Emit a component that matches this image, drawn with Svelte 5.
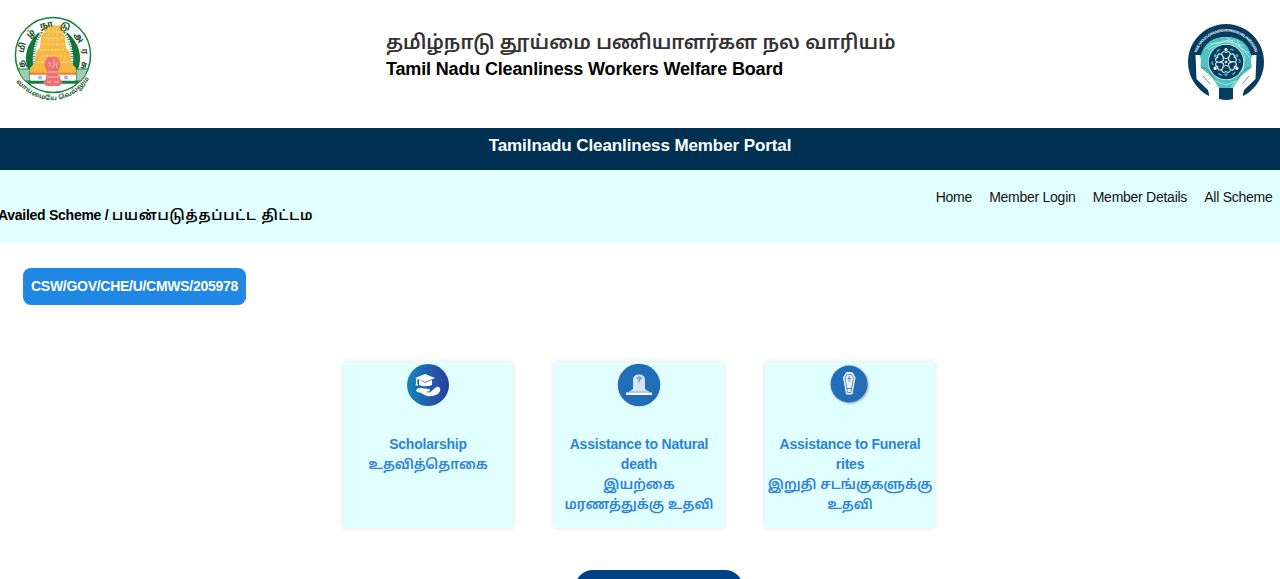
<script>
  const links = ['Home', 'Member Login', 'Member Details', 'All Scheme'];
  const cards = [
    { icon: 'cap', en: ['Scholarship'], ta: ['உதவித்தொகை'] },
    { icon: 'tomb', en: ['Assistance to Natural', 'death'], ta: ['இயற்கை', 'மரணத்துக்கு உதவி'] },
    { icon: 'coffin', en: ['Assistance to Funeral', 'rites'], ta: ['இறுதி சடங்குகளுக்கு', 'உதவி'] }
  ];
  const petals = [0, 60, 120, 180, 240, 300];
  const tiers = [0, 1, 2, 3, 4, 5];
</script>

<div class="page">
  <header>
    <svg class="seal" width="80" height="90" viewBox="0 0 80 90">
      <defs>
        <path id="top-arc" d="M12.500 53 A29.500 29.500 0 1 1 67.500 53" />
        <path id="low-arc" d="M3 68 Q20 86 40 86 Q60 86 76 65" />
      </defs>
      <circle cx="40" cy="41" r="37.6" fill="#fff" stroke="#16803c" stroke-width="1.5" />
      <path d="M25 19 Q8 35 15 56 H26 L24 48 Q19 36 30 18Z M55 19 Q72 35 65 56 H54 L56 48 Q61 36 50 18Z" fill="#137339" />
      <path d="M29 20 Q20 36 23 54 M51 20 Q60 36 57 54" fill="none" stroke="#fff" stroke-width="5" stroke-dasharray="1.6 .8" />
      <path d="M5 55 H17 V67 H12 Q7 62 5 55Z M75 55 H63 V67 H68 Q73 62 75 55Z" fill="#a3cbb4" stroke="#16803c" />
      <path d="M30 13 L34 11 L37 12 L40 11 L43 12 L46 11 L50 13 L49 18 L52 22 L53 34 L57 38 L58 49 L63 54 V58 H17 V54 L22 49 L23 38 L27 34 L28 22 L31 18Z" fill="#f5b942" />
      {#each tiers as t}
        <path d={`M${31 - t * 1.3} ${18 + t * 6} H${49 + t * 1.3}`} stroke="#fff3cf" stroke-width=".8" stroke-dasharray="2 1.6" />
      {/each}
      <path d="M36 14 V34 M40 14 V34 M44 14 V34" stroke="#fbdc90" stroke-width=".8" stroke-dasharray="3 2" />
      <path d="M17 59.500 H63" stroke="#f07f2e" stroke-width="2.600" />
      <path d="M17 63.500 H63" stroke="#fff" stroke-width="5" />
      <path d="M15 68.200 H65" stroke="#16803c" stroke-width="3" />
      <circle cx="27" cy="63.500" r="1.500" fill="#c5cde8" stroke="#7383bd" stroke-width=".8" />
      <circle cx="53" cy="63.500" r="1.500" fill="#c5cde8" stroke="#7383bd" stroke-width=".8" />
      <path d="M33 46 Q34 42 39 43 Q44 41 46 46 Q49 50 46 55 L44 60 L47 62 V65 L49 67 Q49 72 45 72 H34 Q30 71 31 67 L33 65 V62 L35 60 L33 55 Q30 50 33 46Z" fill="#ec7272" />
      <path d="M35 48 L38 50 L36 53 M41 45 V51 L39 54 M45 48 L43 51 L44 54 M35 58 H44 M34 63 H46 M34 68 H38 M41 68 H46" fill="none" stroke="#ffd8d5" stroke-width=".8" />
      <text class="top-text"><textPath href="#top-arc" textLength="116">த மி ழ் நா டு அ ர சு</textPath></text>
      <text class="low-text"><textPath href="#low-arc" textLength="86">வாய்மையே வெல்லும்</textPath></text>
    </svg>

    <div class="titles">
      <h1 lang="ta">தமிழ்நாடு தூய்மை பணியாளர்கள நல வாரியம்</h1>
      <h2>Tamil Nadu Cleanliness Workers Welfare Board</h2>
    </div>

    <svg class="board" width="76" height="78" viewBox="0 0 76 78">
      <defs><path id="board-arc" d="M8.500 29 A31 31 0 0 1 67.500 29" /></defs>
      <path d="M21 72 A38 38 0 1 1 55 72 L54 64 Q64 54 64 35 Q58 13 38 13 Q18 13 12 35 Q12 54 22 64Z" fill="#073c60" />
      <path d="M13 31 Q18 13 38 13 Q58 13 63 31 V44 L52 53 L45 64 H31 L24 53 L13 44Z" fill="#4dc4bd" />
      <path d="M17 25 Q33 12 56 22 M38 13 L55 25 L62 34 M49 16 L57 33 L54 52 M22 20 L47 16 M27 57 L38 61 L48 57 L42 65 M20 26 L38 16 L61 29" fill="none" stroke="#c8f0ec" stroke-width=".7" />
      <circle cx="38" cy="38" r="18" fill="#d9f3f1" />
      <circle cx="38" cy="38" r="17.300" fill="#073c60" />
      {#each petals as a}
        <g transform={`rotate(${a} 38 38)`}>
          <path d="M38 35 Q32.500 32 34 28.500 Q36 26.500 38 28.500 Q40 26.500 42 28.500 Q43.500 32 38 35Z" fill="#073c60" stroke="#f2fbfb" stroke-width="1" />
          <circle cx="38" cy="25.500" r="1.600" fill={a % 120 === 0 ? '#fff' : '#35b9b2'} />
          <path d="M42 25.500 Q44 24.500 45.500 26.500" fill="none" stroke="#35b9b2" stroke-width="1.500" />
        </g>
      {/each}
      <circle cx="38" cy="38" r="1.300" fill="#fff" />
      <path d="M7.500 31 H12.500 V43 L17 48 L27 61 V64 L21.500 72 L20 66 L8.500 55Z M68.500 31 H63.500 V43 L59 48 L49 61 V64 L54.500 72 L56 66 L67.500 55Z" fill="#fff" />
      <path d="M24 60 L21.500 65 V72 L25 76 H30 V62Z M52 60 L54.500 65 V72 L51 76 H46 V62Z" fill="#fff" />
      <path d="M13 44 Q18 43 22 49 L27 56 M63 44 Q58 43 54 49 L49 56 M15 52 L22 60 M61 52 L54 60" fill="none" stroke="#377b90" stroke-width=".8" />
      <path d="M31 64 H45 V75 Q38 77 31 75Z" fill="#073c60" />
      <text class="board-text"><textPath href="#board-arc" textLength="77">TAMIL NADU CLEANLINESS WORKERS WELFARE BOARD</textPath></text>
    </svg>
  </header>

  <div class="portal">Tamilnadu Cleanliness Member Portal</div>

  <div class="subbar">
    <div class="crumb">Availed Scheme / <span class="crumb-ta" lang="ta">பயன்படுத்தப்பட்ட திட்டம</span></div>
    <nav>
      {#each links as link}<a href="#top">{link}</a>{/each}
    </nav>
  </div>

  <main>
    <div class="badge">CSW/GOV/CHE/U/CMWS/205978</div>
    <div class="cards">
      {#each cards as card}
        <article>
          {#if card.icon === 'cap'}
            <svg width="44" height="44" viewBox="0 0 44 44">
              <defs><linearGradient id="cap-fill"><stop stop-color="#1683bd" /><stop offset="1" stop-color="#2b3d9d" /></linearGradient></defs>
              <circle cx="22" cy="22" r="21" fill="url(#cap-fill)" />
              <path d="M9 15 L19 11 L29 15 L19 19Z M13 17 L19 19.800 L26 17 V22 Q19 24.500 13 22Z M10 16 H11.200 V20 L12 22.500 H9.500 L10 20Z" fill="#fff" />
              <path d="M10 27 Q14 23.500 18 25.500 L23 26 Q25 27 23 28.500 L19 29 L24 29.500 L29 25 Q32 22.500 34 25 Q35 29 31 31.500 Q26 34 21 33 L17 31 Q14 29 11 29Z" fill="#fff" />
            </svg>
          {:else if card.icon === 'tomb'}
            <svg width="44" height="44" viewBox="0 0 44 44">
              <circle cx="22" cy="22" r="21.300" fill="#226db8" />
              <path d="M16 26 V17 Q16 11.500 22 11.500 Q28 11.500 28 17 V26 L31 28 H13Z" fill="#d6e5f5" />
              <path d="M12 28 H32 V29.500 H12Z" fill="#a9c8e9" />
              <path d="M9 29.500 H35 V32 H9Z" fill="#fff" />
              <path d="M22 19.500 V15 M20 16 Q20 14 22 14 Q25 14 24 16 Q23 17 22 16" fill="none" stroke="#3c78b4" stroke-width=".9" />
            </svg>
          {:else}
            <svg class="coffin" width="44" height="44" viewBox="0 0 44 44">
              <circle cx="21" cy="21" r="18.500" fill="#226db8" />
              <path d="M18.500 9.500 H24 L27 14.500 L24 31 H18.500 L15.500 14.500Z" fill="#eaf4fd" stroke="#fff" stroke-width="1" />
              <path d="M19 11.500 H23.500 L25.500 15 L23 29.500 H19.500 L17 15Z M18.500 25.500 H24 M21.200 13 V19 M19.500 15.500 H23" fill="none" stroke="#3474b8" stroke-width=".8" />
            </svg>
          {/if}
          <div class="label">
            {#each card.en as line}<span>{line}</span>{/each}
            {#each card.ta as line}<span class="ta" lang="ta">{line}</span>{/each}
          </div>
        </article>
      {/each}
    </div>
    <button aria-label="Continue"></button>
  </main>
</div>

<style>
  :global(body) { overflow: hidden; background: #fff; }
  .page { height: 579px; overflow: hidden; font-family: "Liberation Sans", "Noto Sans Tamil", "Noto Sans", sans-serif; color: #000; }
  header { height: 128px; box-sizing: border-box; display: grid; grid-template-columns: 386px 1fr 92px; align-items: start; }
  .seal { margin: 14px 0 0 13px; overflow: visible; }
  .board { margin: 24px 0 0; }
  .top-text { font-size: 8.500px; font-weight: bold; fill: #164d2b; }
  .low-text { font-size: 6.500px; font-weight: bold; fill: #28643d; }
  .board-text { font-size: 3.600px; font-weight: bold; fill: #e8f5fa; }
  h1, h2 { margin: 0; white-space: nowrap; }
  h1 { padding-top: 28px; font-size: 19.400px; line-height: 28px; font-weight: 600; color: #333; }
  h2 { font-size: 18px; line-height: 26px; letter-spacing: -.16px; }
  .portal { height: 42px; box-sizing: border-box; padding-top: 8px; background: #003153; color: #fff; font-size: 17px; line-height: 20px; font-weight: bold; text-align: center; letter-spacing: -.09px; }
  .subbar { height: 73px; background: #e2ffff; display: flex; justify-content: space-between; }
  .crumb { margin: 35px 0 0 -2px; font-size: 14px; line-height: 20px; font-weight: bold; white-space: nowrap; letter-spacing: -.27px; }
  .crumb-ta { font-size: 13.800px; font-weight: 600; letter-spacing: .8px; }
  nav { display: flex; gap: 17.200px; padding: 17px 7.500px 0 0; font-size: 14px; line-height: 20px; letter-spacing: -.26px; }
  nav a { color: #111; text-decoration: none; white-space: nowrap; }
  main { display: flex; flex-direction: column; padding-top: 25px; }
  .badge { align-self: flex-start; margin-left: 23px; box-sizing: border-box; width: 223px; height: 37px; border-radius: 8px; background: #2187e5; color: #fff; font-size: 14px; line-height: 37px; font-weight: bold; text-align: center; white-space: nowrap; letter-spacing: -.28px; }
  .cards { margin: 57px 0 0 343px; display: grid; grid-template-columns: repeat(3, 170px); gap: 41px; }
  article { height: 166px; background: #e2ffff; box-shadow: 0 0 5px rgba(0, 0, 0, .12); display: flex; flex-direction: column; align-items: center; }
  article svg { flex: none; margin-top: 1px; }
  .coffin { filter: drop-shadow(1px 1px 1px rgba(0, 0, 0, .35)); }
  .label { margin-top: 27px; display: flex; flex-direction: column; align-items: center; color: #2b83dc; font-size: 14px; line-height: 20px; font-weight: bold; white-space: nowrap; letter-spacing: -.22px; }
  .label span { display: block; height: 20px; }
  .label .ta { font-size: 13.600px; font-weight: 600; line-height: 21px; letter-spacing: 0; }
  button { margin: 42px 0 0 575px; width: 168px; height: 40px; border: 0; border-radius: 18px; background: #004085; }
</style>
